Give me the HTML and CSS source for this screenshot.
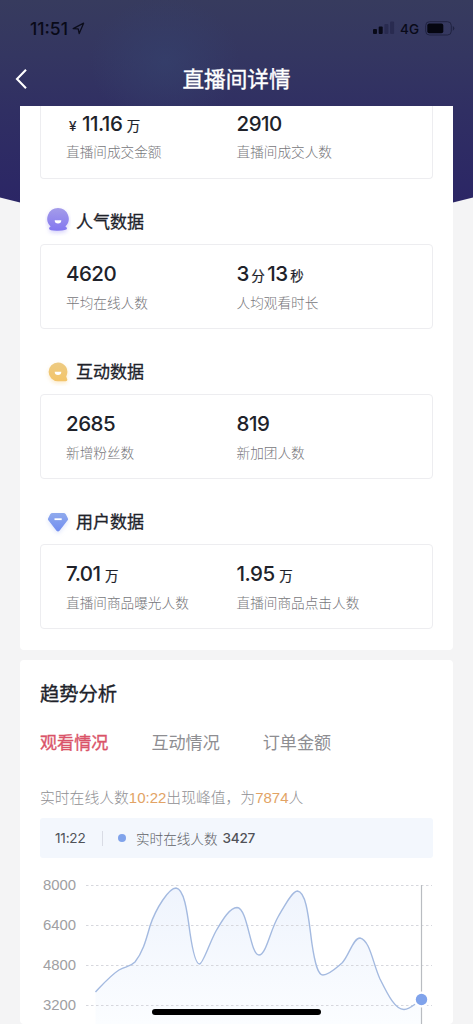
FILE: index.html
```html
<!DOCTYPE html>
<html lang="zh-CN">
<head>
<meta charset="utf-8">
<meta name="viewport" content="width=device-width, initial-scale=1">
<title>直播间详情</title>
<link rel="stylesheet" href="styles.css">
</head>
<body>
<div class="screen">
  <svg class="backdrop" width="473" height="210" viewBox="0 0 473 210" aria-hidden="true">
    <defs>
      <linearGradient id="night" x1="0" y1="0" x2="0" y2="1">
        <stop offset="0" stop-color="#373b5e"/><stop offset=".25" stop-color="#343661"/><stop offset=".5" stop-color="#302f63"/><stop offset="1" stop-color="#2a2466"/>
      </linearGradient>
      <radialGradient id="glow"><stop offset="0" stop-color="#35406c" stop-opacity=".75"/><stop offset="1" stop-color="#35406c" stop-opacity="0"/></radialGradient>
    </defs>
    <path d="M0 0H473V197.500L453 202.500Q236 240 20 202.500L0 197.500Z" fill="url(#night)"/>
    <ellipse cx="165" cy="62" rx="75" ry="65" fill="url(#glow)"/>
  </svg>
  <header class="header">
    <div class="status">
      <div class="status-time"><span>11:51</span>
        <svg width="13" height="13" viewBox="0 0 13 13"><path d="M1.200 6.600 11.600 1.200 7.200 11.600 6.200 6.800Z" fill="none" stroke="#0c0d1c" stroke-width="1.300" stroke-linejoin="round"/></svg>
      </div>
      <div class="status-net">
        <svg width="22" height="14" viewBox="0 0 22 14"><rect x="0" y="8" width="4" height="5" rx="1" fill="#090a18"/><rect x="5.700" y="5.500" width="4" height="7.500" rx="1" fill="#090a18"/><rect x="11.400" y="3" width="4" height="10" rx="1" fill="#292b50"/><rect x="17.100" y="0.500" width="4" height="12.500" rx="1" fill="#292b50"/></svg>
        <span>4G</span>
        <svg width="30" height="15" viewBox="0 0 30 15"><rect x=".7" y=".7" width="25.600" height="13.300" rx="3.800" fill="none" stroke="#202341" stroke-width="1"/><rect x="2.300" y="2.500" width="16" height="9.700" rx="2" fill="#050610"/><path d="M27.800 5v4.700q1.500-.7 1.500-2.350T27.800 5Z" fill="#202341"/></svg>
      </div>
    </div>
    <div class="nav">
      <svg class="back" width="14" height="22" viewBox="0 0 14 22"><path d="M12 1.800 3 11 12 20.200" fill="none" stroke="#fff" stroke-width="2.100"/></svg>
      <h1>直播间详情</h1>
    </div>
  </header>
  <main>
    <section class="panel stats">
      <div class="card card-cut">
        <div class="metric"><p class="value"><small class="yen">¥</small><b>11.16</b><small>万</small></p><p class="label">直播间成交金额</p></div>
        <div class="metric"><p class="value"><b>2910</b></p><p class="label">直播间成交人数</p></div>
      </div>
      <h2 class="group">
        <svg width="26" height="30" viewBox="0 0 26 30"><defs><linearGradient id="violet" x1="0" y1="0" x2="0" y2="1"><stop stop-color="#a49ce9"/><stop offset="1" stop-color="#8377f0"/></linearGradient></defs><path class="shade violet" d="M13 2A10.700 10.700 0 0 1 20.300 20.500Q21.800 21.100 22 22.800Q21.700 24.500 13 24.700T4 22.800Q4.200 21.100 5.700 20.500A10.700 10.700 0 0 1 13 2Z" fill="url(#violet)"/><path d="M9.700 14.300h6.600q0 3.300-3.300 3.300t-3.300-3.300Z" fill="#fff"/></svg>
        <span>人气数据</span>
      </h2>
      <div class="card">
        <div class="metric"><p class="value"><b>4620</b></p><p class="label">平均在线人数</p></div>
        <div class="metric"><p class="value tight"><b>3</b><small>分</small><b class="next">13</b><small>秒</small></p><p class="label">人均观看时长</p></div>
      </div>
      <h2 class="group">
        <svg width="26" height="30" viewBox="0 0 26 30"><defs><linearGradient id="amber" x1="0" y1="0" x2="0" y2="1"><stop stop-color="#edcb83"/><stop offset="1" stop-color="#f3c469"/></linearGradient></defs><path class="shade amber" d="M13 6.400A9.400 9.400 0 0 1 21.200 20.400L22.300 23.400Q22.600 25.300 20.600 25.200H13A9.400 9.400 0 0 1 13 6.400Z" fill="url(#amber)"/><path d="M9.700 15.800h6.600q0 3.200-3.300 3.200t-3.300-3.200Z" fill="#fff"/></svg>
        <span>互动数据</span>
      </h2>
      <div class="card">
        <div class="metric"><p class="value"><b>2685</b></p><p class="label">新增粉丝数</p></div>
        <div class="metric"><p class="value"><b>819</b></p><p class="label">新加团人数</p></div>
      </div>
      <h2 class="group">
        <svg width="26" height="30" viewBox="0 0 26 30"><defs><linearGradient id="azure" x1="0" y1="0" x2="0" y2="1"><stop stop-color="#8faaed"/><stop offset="1" stop-color="#718df0"/></linearGradient></defs><path class="shade azure" d="M7.500 6h11q1.500 0 2.300 1.300l2 3.900q.6 1.300-.4 2.400L14.500 23.800q-1.500 1.500-3 0L3.600 13.600q-1-1.100-.4-2.400l2-3.900Q6 6 7.500 6Z" fill="url(#azure)"/><path d="M9.500 12.200h7.200" stroke="#fff" stroke-width="1.800"/></svg>
        <span>用户数据</span>
      </h2>
      <div class="card">
        <div class="metric"><p class="value"><b>7.01</b><small>万</small></p><p class="label">直播间商品曝光人数</p></div>
        <div class="metric"><p class="value"><b>1.95</b><small>万</small></p><p class="label">直播间商品点击人数</p></div>
      </div>
    </section>
    <section class="panel trend">
      <h2 class="trend-title">趋势分析</h2>
      <nav class="tabs"><span class="active">观看情况</span><span>互动情况</span><span>订单金额</span></nav>
      <p class="peak">实时在线人数<em>10:22</em>出现峰值，为<em>7874</em>人</p>
      <div class="readout"><span class="moment">11:22</span><i class="rule"></i><i class="dot"></i><span class="series">实时在线人数</span><strong>3427</strong></div>
      <div class="chart">
        <div class="axis"><span>8000</span><span>6400</span><span>4800</span><span>3200</span></div>
        <svg width="353" height="149" viewBox="80 875 353 149">
          <defs><linearGradient id="area" x1="0" y1="0" x2="0" y2="1"><stop stop-color="#eff4fd"/><stop offset="1" stop-color="#fbfdff"/></linearGradient></defs>
          <path d="M95.500 992C104 983 111 975 119 970C126 966 130 967 135 962C143 952 146 940 150 926C156 908 169 888 176 888C184 889 187 910 190 933C193 953 196 964 199.500 964C203 964 209 944 216 931C223 919 230 907.500 237 907.500C248 908 250 955 259 955C266 955 270 931 278 917C284 907 292 891 297.500 891C307 892 309 923 312 944C315 964 318 975 323 975C329 975 336 968 342 963C349 956 353 938 360 938C370 940 373 964 380 979C388 995 395 1009.500 404 1009.500C411 1009 414 1004 421.500 1000V1024H95.500Z" fill="url(#area)"/>
          <path d="M86 885.500H432M86 925.500H432M86 965.500H432M86 1005.500H432" fill="none" stroke="#d6d7dd" stroke-dasharray="2.500 2.500"/>
          <path d="M421.500 885V1024" stroke="#b9bcc1" stroke-width="1.200"/>
          <path d="M95.500 992C104 983 111 975 119 970C126 966 130 967 135 962C143 952 146 940 150 926C156 908 169 888 176 888C184 889 187 910 190 933C193 953 196 964 199.500 964C203 964 209 944 216 931C223 919 230 907.500 237 907.500C248 908 250 955 259 955C266 955 270 931 278 917C284 907 292 891 297.500 891C307 892 309 923 312 944C315 964 318 975 323 975C329 975 336 968 342 963C349 956 353 938 360 938C370 940 373 964 380 979C388 995 395 1009.500 404 1009.500C411 1009 414 1004 421.500 1000" fill="none" stroke="#a4bae0" stroke-width="1.400"/>
          <circle cx="421.500" cy="999.500" r="8" fill="#fff"/><circle cx="421.500" cy="999.500" r="5.700" fill="#80a3eb"/>
        </svg>
      </div>
    </section>
  </main>
  <div class="home-indicator"></div>
</div>
</body>
</html>
```

FILE: styles.css
```css
* { box-sizing: border-box; }
body { margin: 0; background: #f4f4f5; font-family: Inter, "Noto Sans CJK SC", sans-serif; color: #20222a; }
h1, h2, p { margin: 0; font-weight: 400; }
svg { display: block; flex-shrink: 0; }
.screen { position: relative; width: 473px; height: 1024px; overflow: hidden; }
.backdrop { position: absolute; inset: 0 auto auto 0; }
.header { position: relative; height: 106px; }
.status { display: flex; justify-content: space-between; height: 56px; padding: 0 18px 0 30px; align-items: center; color: #090a18; }
.status-time { display: flex; align-items: center; gap: 4px; padding-top: 1px; font-size: 17.5px; font-weight: 500; letter-spacing: 0; }
.status-net { display: flex; align-items: center; font-size: 13.5px; font-weight: 500; }
.status-net span { margin: 1px 6px 0 5px; }
.nav { display: grid; grid-template-columns: 60px 1fr 60px; height: 45px; align-items: center; }
.back { margin-left: 14px; }
.nav h1 { font-size: 21.600px; line-height: 32px; color: #fff; text-align: center; -webkit-text-stroke: .35px currentColor; }
main { position: relative; display: flex; flex-direction: column; gap: 10px; padding: 0 20px; }
.panel { background: #fff; border-radius: 4px; padding: 0 20px; width: 433px; }
.stats { height: 544px; border-radius: 0 0 4px 4px; }
.card { display: grid; grid-template-columns: 170.500px 1fr; width: 393px; height: 85px; padding: 14px 25px 0; border: 1px solid #ededf0; border-radius: 4px; }
.card-cut { height: 72.500px; padding-top: 3px; border-top: 0; border-radius: 0 0 4px 4px; }
.value { display: flex; align-items: baseline; height: 30px; line-height: 30px; white-space: nowrap; }
.value b { font-size: 20.500px; font-weight: 500; letter-spacing: -.5px; }
.value small { font-size: 13.500px; margin-left: 4.500px; -webkit-text-stroke: .2px currentColor; }
.value .yen { margin: 0 5.500px 0 3px; }
.tight small { margin-left: 2.500px; }
.value .next { margin-left: 2.500px; }
.label { font-size: 13.650px; line-height: 20px; margin-top: 4px; font-weight: 300; color: #77777b; white-space: nowrap; }
.card-cut .label { margin-top: 3px; }
.group { display: flex; align-items: center; height: 65.250px; padding: 20px 0 0 5px; gap: 5px; font-size: 17px; line-height: 24px; -webkit-text-stroke: .3px currentColor; }
.group svg { -webkit-text-stroke: 0; }
.group span { padding-top: 1px; }
.shade { filter: drop-shadow(0 2px 2px #8fa5ef44); }
.violet { filter: drop-shadow(0 2px 2px #8377f055); }
.amber { filter: drop-shadow(0 2px 2px #f3c46955); }
.trend { height: 364px; padding-top: 18px; }
.trend-title { font-size: 19.300px; line-height: 32px; -webkit-text-stroke: .35px currentColor; }
.tabs { display: flex; gap: 43px; margin-top: 20px; font-size: 17.100px; line-height: 26px; color: #8e8e92; }
.tabs .active { color: #da5369; -webkit-text-stroke: .35px currentColor; }
.peak { margin-top: 31px; height: 22px; font-size: 14.800px; line-height: 22px; font-weight: 300; color: #8f8f93; white-space: nowrap; }
.peak em { font-family: "Liberation Sans", sans-serif; font-style: normal; font-size: 15px; font-weight: 400; color: #e2a365; }
.readout { display: flex; align-items: center; height: 40px; margin-top: 9px; padding-left: 15px; background: #f3f7fd; border-radius: 3px; font-size: 13.600px; color: #606268; }
.moment { width: 47px; color: #505258; letter-spacing: -.2px; }
.rule { width: 1px; height: 15px; background: #d9dce5; }
.dot { width: 8px; height: 8px; margin: 0 10px 0 15px; border-radius: 50%; background: #80a3eb; }
.series { font-weight: 300; }
.readout strong { margin-left: 5px; font-weight: 500; color: #505258; letter-spacing: -.3px; }
.chart { display: flex; margin-top: 17px; }
.axis { display: flex; flex-direction: column; width: 40px; padding-left: 3px; font-family: "Liberation Sans", sans-serif; font-size: 14.900px; line-height: 20px; color: #a0a0a3; gap: 20px; }
.home-indicator { position: absolute; left: 152px; top: 1009px; width: 169px; height: 6px; border-radius: 3px; background: #000; }
```
